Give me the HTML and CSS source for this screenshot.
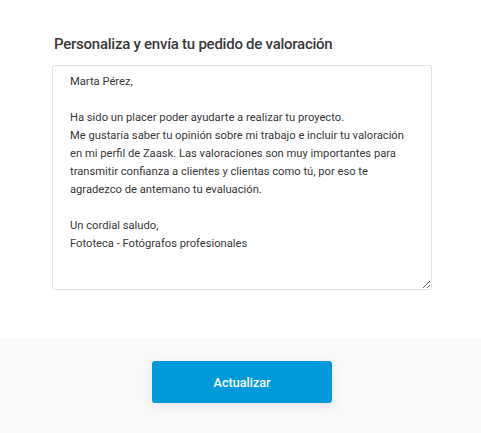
FILE: index.html
```html
<!DOCTYPE html>
<html lang="es">
<head>
<meta charset="utf-8">
<link rel="stylesheet" href="styles.css">
</head>
<body>
<main class="content">
  <h2 class="title">Personaliza y envía tu pedido de valoración</h2>
  <textarea class="message">Marta Pérez,

Ha sido un placer poder ayudarte a realizar tu proyecto.
Me gustaría saber tu opinión sobre mi trabajo e incluir tu valoración en mi perfil de Zaask. Las valoraciones son muy importantes para transmitir confianza a clientes y clientas como tú, por eso te agradezco de antemano tu evaluación.

Un cordial saludo,
Fototeca - Fotógrafos profesionales</textarea>
</main>
<footer class="footer">
  <button class="btn">Actualizar</button>
</footer>
</body>
</html>
```
FILE: styles.css
```css
html, body {
  margin: 0;
  padding: 0;
  background: #ffffff;
}
body {
  width: 481px;
  height: 433px;
  overflow: hidden;
  font-family: Roboto, "Liberation Sans", sans-serif;
}
.content {
  padding: 34px 0 0 52px;
  height: 305px;
  box-sizing: border-box;
}
.title {
  margin: 0 0 11px 2px;
  font-family: Roboto, "Liberation Sans", sans-serif;
  font-weight: 500;
  font-size: 15px;
  line-height: 20px;
  letter-spacing: -0.25px;
  color: #3a3a3a;
}
.message {
  display: block;
  width: 380px;
  height: 225px;
  box-sizing: border-box;
  margin: 0;
  padding: 7px 17px;
  border: 1px solid #e4e4e4;
  border-radius: 3px;
  font-family: Roboto, "Liberation Sans", sans-serif;
  font-size: 11.2px;
  line-height: 18px;
  color: #383838;
  background: #fff;
  resize: vertical;
  overflow: hidden;
  outline: none;
}
.footer {
  margin-top: 34px;
  background: #f9f9f9;
  height: 94px;
  display: flex;
  justify-content: center;
  padding: 22px 0 0 3px;
  box-sizing: border-box;
}
.btn {
  width: 180px;
  height: 42px;
  border: none;
  border-radius: 3px;
  background: #0099d9;
  color: #ffffff;
  font-family: Roboto, "Liberation Sans", sans-serif;
  font-weight: 500;
  font-size: 12.6px;
  box-shadow: 0 4px 12px rgba(0, 0, 0, 0.08);
  cursor: pointer;
}
```
